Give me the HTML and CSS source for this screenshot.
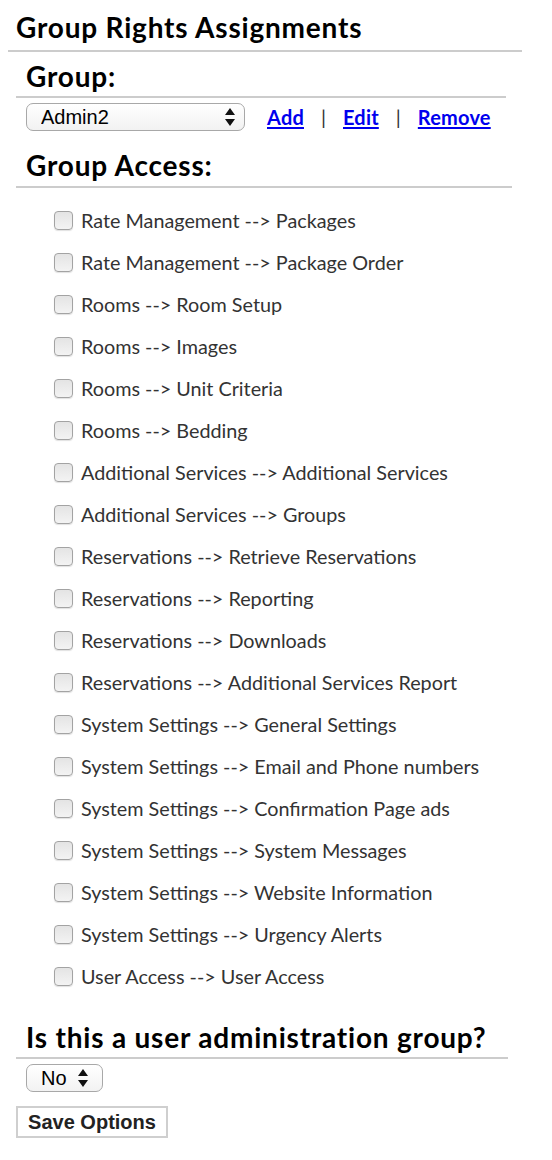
FILE: index.html
```html
<!DOCTYPE html>
<html lang="en">
<head>
<meta charset="utf-8">
<title>Group Rights Assignments</title>
<link rel="stylesheet" href="styles.css">
</head>
<body>
<div class="page">
  <h1 class="title">Group Rights Assignments</h1>
  <div class="section">
    <h2 class="heading heading-group">Group:</h2>
    <div class="group-row">
      <span class="select-wrap select-wide">
        <select class="select"><option>Admin2</option></select>
        <svg class="select-arrows" width="10" height="18" viewBox="0 0 10 18"><path d="M5 0 L10 7 L0 7 Z M0 11 L10 11 L5 18 Z" fill="#111"/></svg>
      </span>
      <a class="link link-first" href="#">Add</a>
      <span class="sep">|</span>
      <a class="link" href="#">Edit</a>
      <span class="sep">|</span>
      <a class="link" href="#">Remove</a>
    </div>
    <h2 class="heading heading-access">Group Access:</h2>
    <ul class="access-list">
      <li class="access-item"><label class="access-label"><input type="checkbox" class="check"><span>Rate Management --&gt; Packages</span></label></li>
      <li class="access-item"><label class="access-label"><input type="checkbox" class="check"><span>Rate Management --&gt; Package Order</span></label></li>
      <li class="access-item"><label class="access-label"><input type="checkbox" class="check"><span>Rooms --&gt; Room Setup</span></label></li>
      <li class="access-item"><label class="access-label"><input type="checkbox" class="check"><span>Rooms --&gt; Images</span></label></li>
      <li class="access-item"><label class="access-label"><input type="checkbox" class="check"><span>Rooms --&gt; Unit Criteria</span></label></li>
      <li class="access-item"><label class="access-label"><input type="checkbox" class="check"><span>Rooms --&gt; Bedding</span></label></li>
      <li class="access-item"><label class="access-label"><input type="checkbox" class="check"><span>Additional Services --&gt; Additional Services</span></label></li>
      <li class="access-item"><label class="access-label"><input type="checkbox" class="check"><span>Additional Services --&gt; Groups</span></label></li>
      <li class="access-item"><label class="access-label"><input type="checkbox" class="check"><span>Reservations --&gt; Retrieve Reservations</span></label></li>
      <li class="access-item"><label class="access-label"><input type="checkbox" class="check"><span>Reservations --&gt; Reporting</span></label></li>
      <li class="access-item"><label class="access-label"><input type="checkbox" class="check"><span>Reservations --&gt; Downloads</span></label></li>
      <li class="access-item"><label class="access-label"><input type="checkbox" class="check"><span>Reservations --&gt; Additional Services Report</span></label></li>
      <li class="access-item"><label class="access-label"><input type="checkbox" class="check"><span>System Settings --&gt; General Settings</span></label></li>
      <li class="access-item"><label class="access-label"><input type="checkbox" class="check"><span>System Settings --&gt; Email and Phone numbers</span></label></li>
      <li class="access-item"><label class="access-label"><input type="checkbox" class="check"><span>System Settings --&gt; Confirmation Page ads</span></label></li>
      <li class="access-item"><label class="access-label"><input type="checkbox" class="check"><span>System Settings --&gt; System Messages</span></label></li>
      <li class="access-item"><label class="access-label"><input type="checkbox" class="check"><span>System Settings --&gt; Website Information</span></label></li>
      <li class="access-item"><label class="access-label"><input type="checkbox" class="check"><span>System Settings --&gt; Urgency Alerts</span></label></li>
      <li class="access-item"><label class="access-label"><input type="checkbox" class="check"><span>User Access --&gt; User Access</span></label></li>
    </ul>
    <h2 class="heading heading-admin">Is this a user administration group?</h2>
    <div class="admin-row">
      <span class="select-wrap select-small">
        <select class="select"><option>No</option></select>
        <svg class="select-arrows" width="10" height="18" viewBox="0 0 10 18"><path d="M5 0 L10 7 L0 7 Z M0 11 L10 11 L5 18 Z" fill="#111"/></svg>
      </span>
    </div>
    <button class="save" type="button">Save Options</button>
  </div>
</div>
</body>
</html>
```

FILE: styles.css
```css
html, body {
  margin: 0;
  padding: 0;
  background: #fff;
}
body {
  margin: 8px;
  font-family: Lato, "Open Sans", sans-serif;
  color: #000;
}
.page {
  display: flex;
  flex-direction: column;
  align-items: flex-start;
}
.title {
  margin: 4px 0 0 0;
  width: 506px;
  padding: 0 0 8px 8px;
  font-size: 28px;
  letter-spacing: 0.8px;
  line-height: 30px;
  font-weight: 700;
  border-bottom: 2px solid #cccccc;
}
.section {
  margin-left: 8px;
  display: flex;
  flex-direction: column;
  align-items: flex-start;
}
.heading {
  margin: 0;
  padding: 0 0 5px 10px;
  font-size: 28px;
  letter-spacing: 0.8px;
  line-height: 30px;
  font-weight: 700;
  border-bottom: 2px solid #cccccc;
}
.heading-group {
  margin-top: 9px;
  width: 480px;
}
.heading-access {
  margin-top: 19px;
  width: 486px;
  padding-bottom: 6px;
}
.heading-admin {
  margin-top: 25px;
  width: 482px;
}
.group-row {
  margin-top: 5px;
  margin-left: 10px;
  display: flex;
  align-items: center;
  height: 28px;
}
.select-wrap {
  position: relative;
  display: inline-block;
  height: 28px;
}
.select {
  -webkit-appearance: none;
  appearance: none;
  box-sizing: border-box;
  height: 28px;
  margin: 0;
  border: 1.5px solid #a8a8a8;
  border-radius: 7px;
  background: linear-gradient(#ffffff, #f2f2f2);
  font-family: "Liberation Sans", Arial, sans-serif;
  font-size: 20px;
  color: #000;
  padding: 0 0 0 14px;
}
.select-wide .select {
  width: 219px;
}
.select-small .select {
  width: 77px;
}
.select-arrows {
  position: absolute;
  top: 5px;
  pointer-events: none;
}
.select-wide .select-arrows {
  right: 10px;
}
.select-small .select-arrows {
  right: 15px;
}
.link {
  font-size: 20px;
  font-weight: 700;
  color: #0000ee;
  text-decoration: underline;
  text-underline-offset: 2px;
  line-height: 24px;
  letter-spacing: 0.2px;
}
.link-first {
  margin-left: 22px;
}
.sep {
  font-size: 20px;
  line-height: 24px;
  color: #333;
  margin: 0 17px;
}
.access-list {
  list-style: none;
  margin: 11px 0 0 0;
  padding: 0 0 0 38px;
}
.access-item {
  height: 42px;
  display: flex;
  align-items: center;
}
.access-label {
  display: flex;
  align-items: center;
  font-size: 19.8px;
  line-height: 42px;
  color: #333;
}
.check {
  -webkit-appearance: none;
  appearance: none;
  box-sizing: border-box;
  width: 19px;
  height: 19px;
  margin: 0 8px 0 0;
  border: 1.5px solid #a3a3a3;
  border-radius: 4px;
  background: linear-gradient(#e4e4e4, #f3f3f3);
  box-shadow: 0 1px 1px rgba(0,0,0,0.12);
}
.admin-row {
  margin-top: 5px;
  margin-left: 10px;
  display: flex;
}
.save {
  margin-top: 14px;
  box-sizing: border-box;
  height: 32px;
  width: 152px;
  padding: 0;
  background: #fff;
  border: 2px solid #cfcfcf;
  border-radius: 0;
  font-family: "Liberation Sans", Arial, sans-serif;
  font-size: 20px;
  font-weight: 700;
  color: #222;
}
```
